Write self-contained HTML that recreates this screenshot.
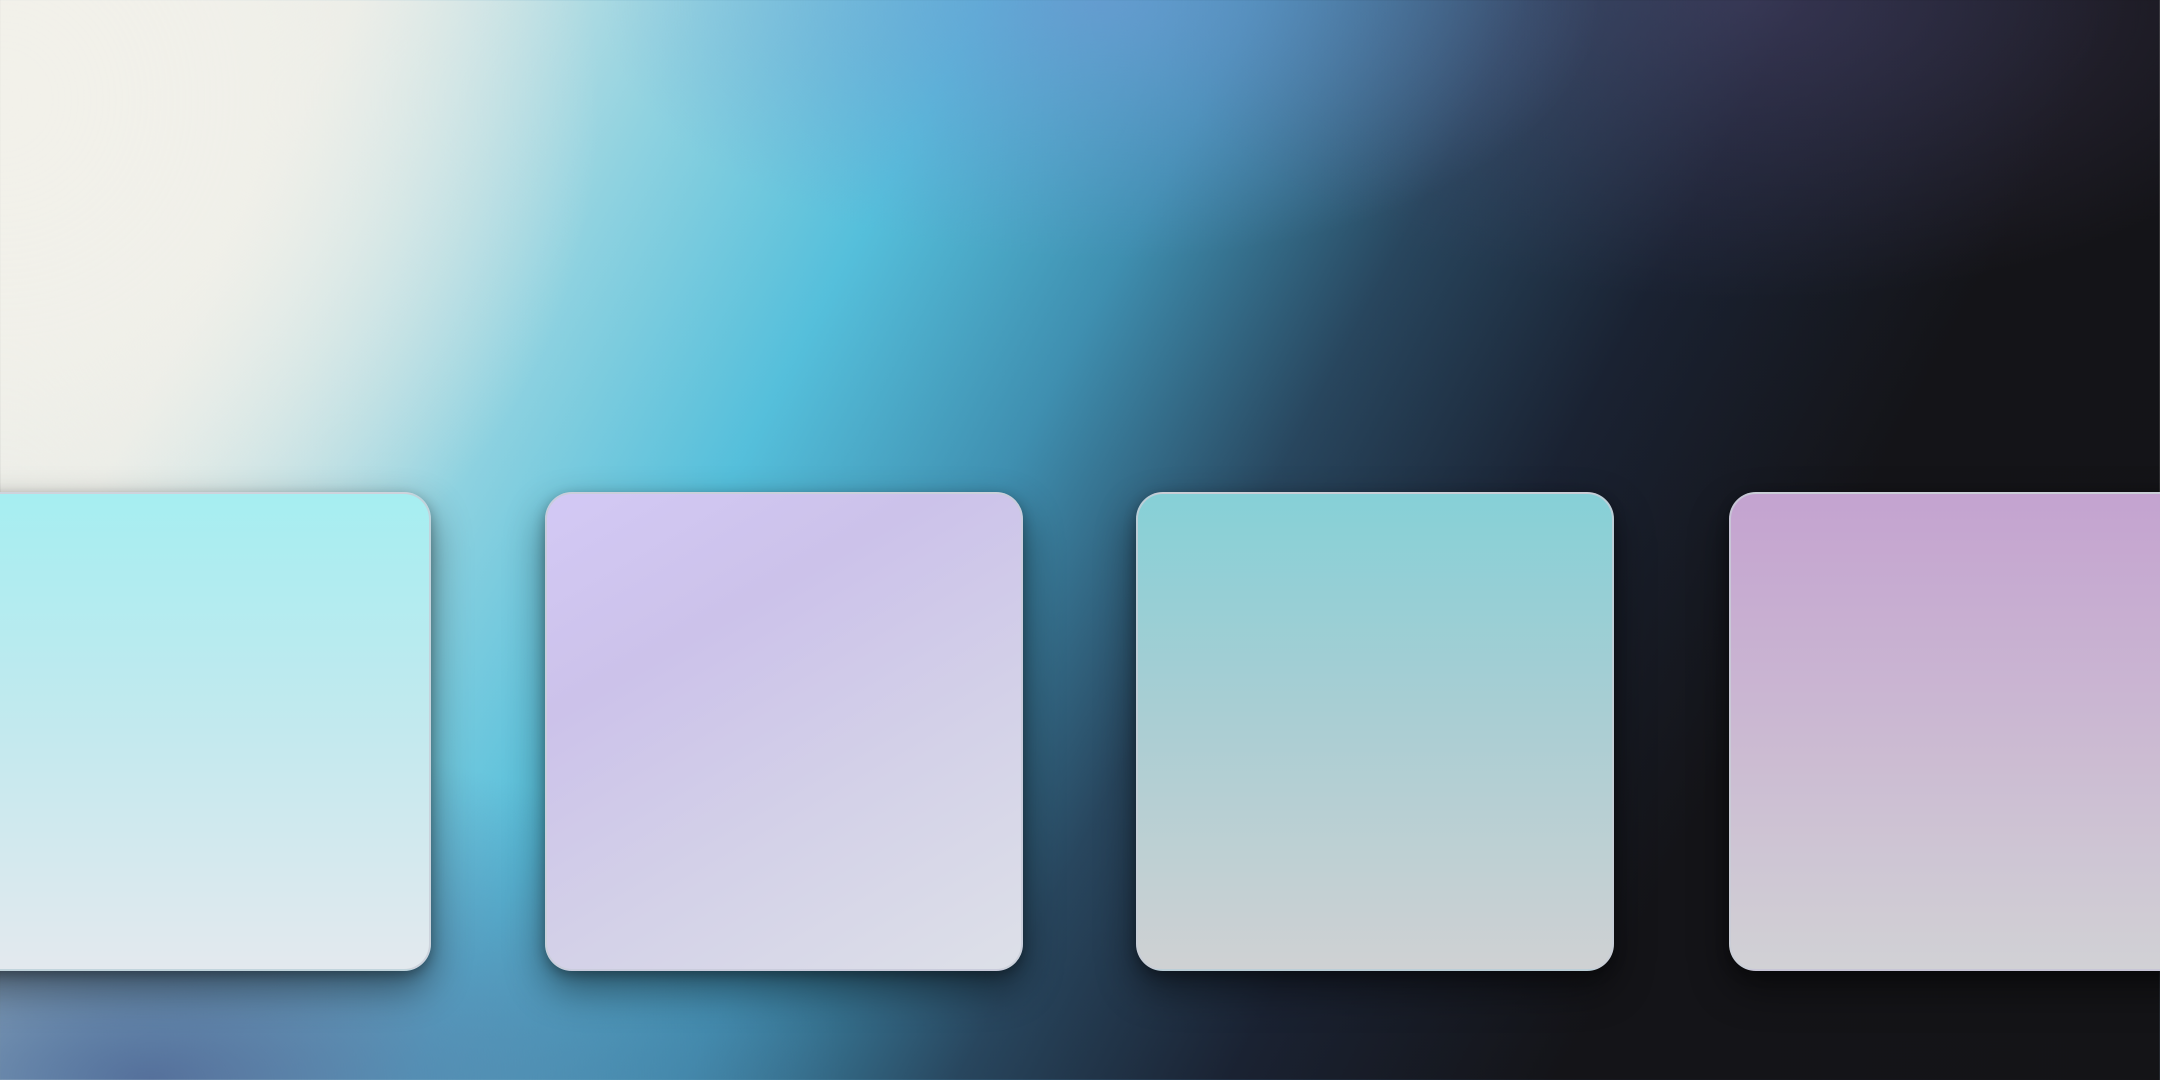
<!DOCTYPE html>
<html><head><meta charset="utf-8"><style>
html,body{margin:0;padding:0;width:2160px;height:1080px;overflow:hidden}
body{position:relative;background:
radial-gradient(ellipse 600px 600px at 0px 100px, rgba(242,241,234,1) 0%, rgba(242,241,234,0.85) 40%, rgba(242,241,234,0) 100%),
radial-gradient(ellipse 500px 260px at 1100px 0px, rgba(110,150,210,0.7) 0%, rgba(110,150,210,0) 100%),
radial-gradient(ellipse 600px 300px at 1750px 0px, rgba(80,70,110,0.5) 0%, rgba(80,70,110,0) 100%),
radial-gradient(ellipse 700px 350px at 150px 1080px, rgba(85,112,155,1) 0%, rgba(85,112,155,0) 100%),
linear-gradient(118deg, #efeee8 0%, #e6eae6 13%, #8fd2e0 26%, #55bfdb 36%, #3f8fb0 46%, #28465e 56%, #1a2232 66%, #141418 78%, #141417 100%);
font-family:"Liberation Sans",sans-serif}
.c{position:absolute;top:492px;width:478px;height:479px;border-radius:27px;box-sizing:border-box;border:2px solid rgba(200,205,215,0.8);box-shadow:0 18px 40px rgba(0,0,0,0.45),0 4px 12px rgba(0,0,0,0.3)}
</style></head><body>
<div class="c" style="left:-47px;background:linear-gradient(180deg,#a6eef1 0%,#c3e9ee 50%,#e3e9ee 100%)"></div>
<div class="c" style="left:545px;background:linear-gradient(150deg,#d3c9f5 0%,#ccc2ea 30%,#d4d2e8 65%,#dde0e8 100%)"></div>
<div class="c" style="left:1136px;background:linear-gradient(180deg,#86d0d7 0%,#a8ced3 45%,#cfd1d3 100%)"></div>
<div class="c" style="left:1729px;background:linear-gradient(180deg,#c4a3d0 0%,#cbb9d2 50%,#d1d1d5 100%)"></div>
</body></html>
